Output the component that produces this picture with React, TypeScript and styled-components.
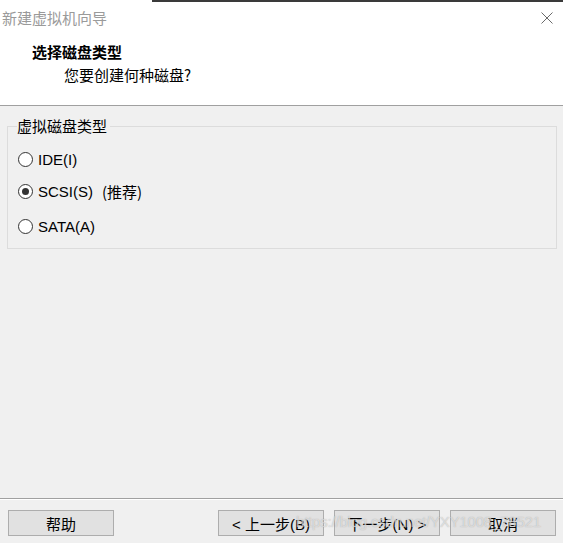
import React from "react";
import styled, { createGlobalStyle } from "styled-components";

const Global = createGlobalStyle`
  html, body { margin: 0; padding: 0; background: #f0f0f0; }
  body { font-family: "Liberation Sans", "Noto Sans CJK SC", sans-serif; }
  * { box-sizing: border-box; }
`;

const Window = styled.div`
  position: relative;
  width: 563px;
  height: 543px;
  display: flex;
  flex-direction: column;
  background: #f0f0f0;
  overflow: hidden;
  color: #000;
`;

const Header = styled.div`
  height: 106px;
  background: #fff;
  border-bottom: 1px solid #a0a0a0;
  display: flex;
  flex-direction: column;
`;

const TopEdge = styled.div`
  height: 2px;
  margin-left: 152px;
  background: #3a3a3a;
`;

const TitleBar = styled.div`
  height: 32px;
  display: flex;
  align-items: center;
  justify-content: space-between;
  padding: 0 10px 0 2px;
`;

const TitleText = styled.div`
  font-family: "Noto Sans CJK SC", sans-serif;
  font-size: 15px;
  line-height: 18px;
  color: #9a9a9a;
`;

const Close = styled.svg`
  width: 12px;
  height: 12px;
  display: block;
`;

const Heading = styled.div`
  margin-top: 8px;
  padding-left: 32px;
  font-family: "Noto Sans CJK SC", sans-serif;
  font-size: 15px;
  font-weight: 700;
  line-height: 20px;
`;

const Sub = styled.div`
  margin-top: 3px;
  padding-left: 64px;
  font-family: "Noto Sans CJK SC", sans-serif;
  font-size: 15px;
  line-height: 20px;
`;

const Body = styled.div`
  flex: 1;
  padding: 10px 6px 0 7px;
`;

const Group = styled.fieldset`
  margin: 0;
  padding: 0 0 12px 10px;
  border: 1px solid #dcdcdc;
  display: flex;
  flex-direction: column;
`;

const Legend = styled.legend`
  padding: 0 3px 0 0;
  margin-left: -1px;
  font-family: "Noto Sans CJK SC", sans-serif;
  font-size: 15px;
  line-height: 20px;
`;

const Option = styled.label<{ $gap: number }>`
  display: flex;
  align-items: center;
  gap: 5px;
  height: 20px;
  margin-top: ${(p) => p.$gap}px;
  font-size: 15px;
`;

const Radio = styled.span<{ $checked?: boolean }>`
  width: 15px;
  height: 15px;
  border-radius: 50%;
  border: 1px solid #333;
  background: #fff;
  display: flex;
  align-items: center;
  justify-content: center;
  &::after {
    content: "";
    width: 7px;
    height: 7px;
    border-radius: 50%;
    background: ${(p) => (p.$checked ? "#333" : "transparent")};
  }
`;

const Note = styled.span`
  font-family: "Noto Sans CJK SC", sans-serif;
  font-size: 15px;
  margin-left: 4px;
`;

const Footer = styled.div`
  height: 45px;
  border-top: 1px solid #a0a0a0;
  box-shadow: inset 0 1px 0 #ffffff;
  display: flex;
  align-items: flex-start;
  padding: 11px 7px 0 8px;
  gap: 10px;
`;

const Button = styled.button<{ $push?: boolean }>`
  width: 106px;
  height: 26px;
  margin-left: ${(p) => (p.$push ? "auto" : "0")};
  background: #e1e1e1;
  border: 1px solid #adadad;
  font-family: "Liberation Sans", "Noto Sans CJK SC", sans-serif;
  font-size: 15px;
  color: #000;
  padding: 0;
  display: flex;
  align-items: center;
  justify-content: center;
`;

const Watermark = styled.div`
  position: absolute;
  left: 296px;
  top: 513px;
  font-family: "Liberation Sans", sans-serif;
  font-size: 15px;
  letter-spacing: -0.2px;
  color: rgba(255, 255, 255, 0.55);
  text-shadow: 0 0 1px rgba(120, 120, 120, 0.6);
  pointer-events: none;
  white-space: nowrap;
`;

export default function App() {
  return (
    <>
      <Global />
      <Window>
        <Header>
          <TopEdge />
          <TitleBar>
            <TitleText>新建虚拟机向导</TitleText>
            <Close viewBox="0 0 12 12">
              <path d="M0.5 0.5 L11.5 11.5 M11.5 0.5 L0.5 11.5" stroke="#6a6a6a" strokeWidth="1" />
            </Close>
          </TitleBar>
          <Heading>选择磁盘类型</Heading>
          <Sub>您要创建何种磁盘?</Sub>
        </Header>
        <Body>
          <Group>
            <Legend>虚拟磁盘类型</Legend>
            <Option $gap={13}>
              <Radio />
              IDE(I)
            </Option>
            <Option $gap={12}>
              <Radio $checked />
              SCSI(S)
              <Note>(推荐)</Note>
            </Option>
            <Option $gap={15}>
              <Radio />
              SATA(A)
            </Option>
          </Group>
        </Body>
        <Footer>
          <Button>帮助</Button>
          <Button $push>&lt; 上一步(B)</Button>
          <Button>下一步(N) &gt;</Button>
          <Button>取消</Button>
        </Footer>
        <Watermark>https://blog.csdn.net/YXY1008_78521</Watermark>
      </Window>
    </>
  );
}
